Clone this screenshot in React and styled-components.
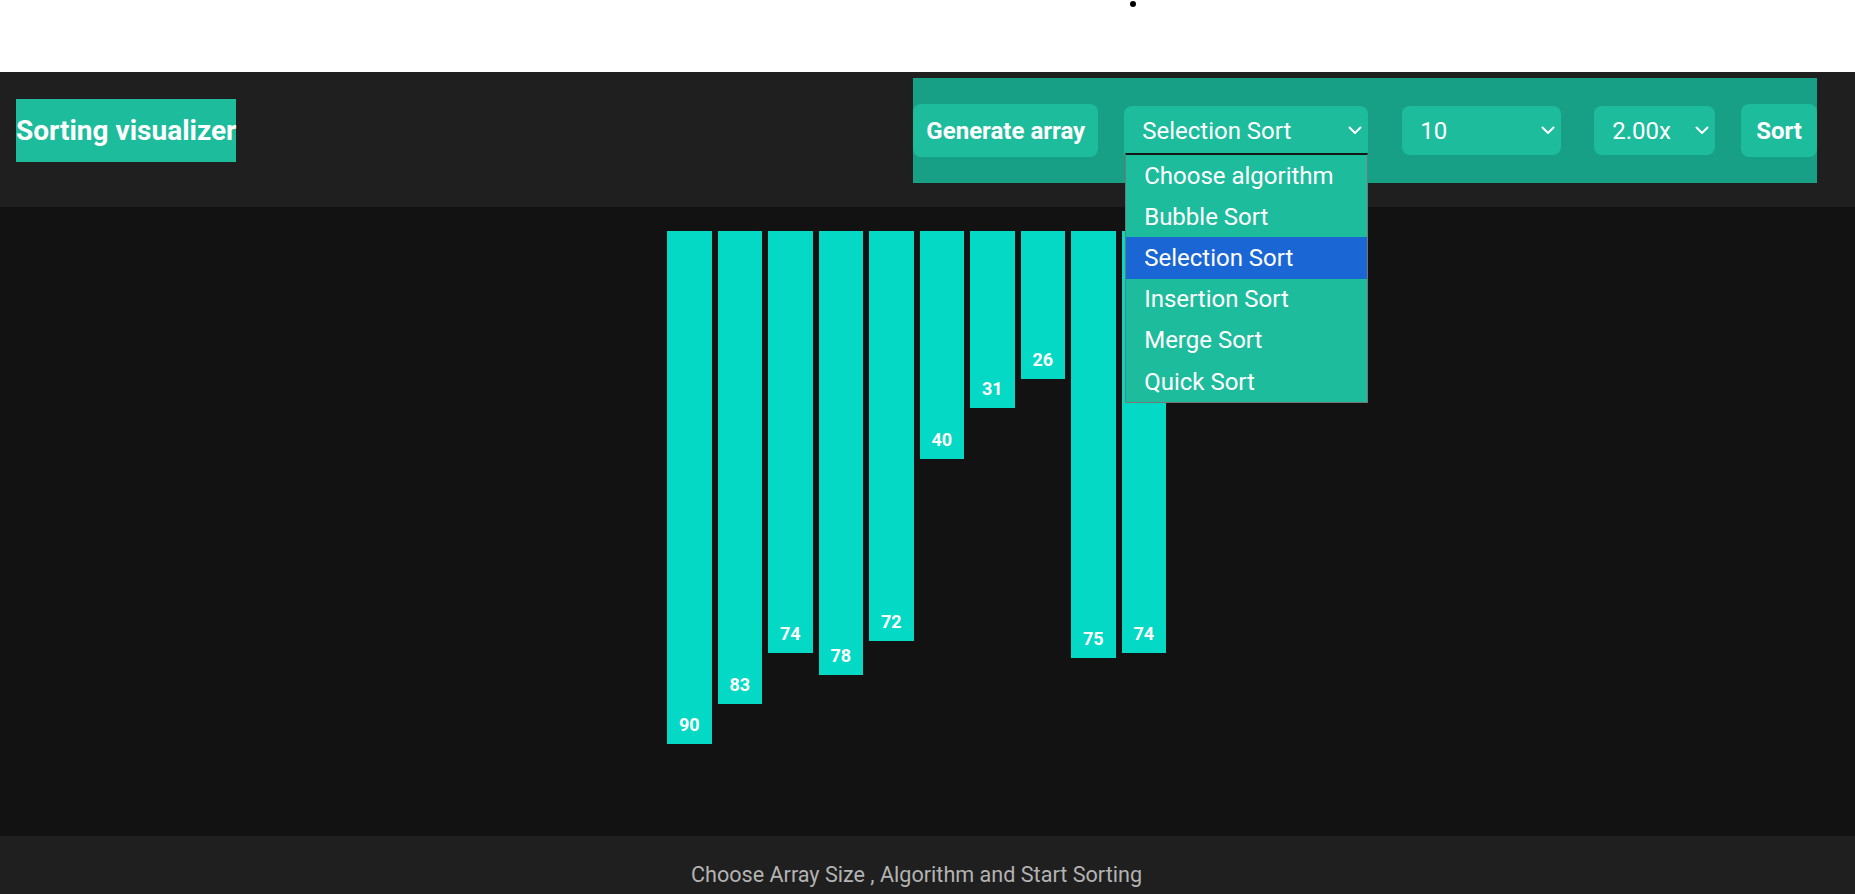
import { useState } from 'react';
import styled, { createGlobalStyle } from 'styled-components';

const GlobalStyle = createGlobalStyle`
  html, body {
    margin: 0;
    padding: 0;
    overflow: hidden;
    background: #ffffff;
    font-family: Roboto, "Noto Sans", Arial, sans-serif;
  }
  * {
    box-sizing: border-box;
  }
`;

const TopStrip = styled.div`
  height: 72px;
  background: #ffffff;
  padding-top: 1px;
`;

const Dot = styled.div`
  width: 6px;
  height: 6px;
  margin-left: 1130px;
  border-radius: 50%;
  background: #000;
`;

const Header = styled.header`
  display: flex;
  align-items: center;
  justify-content: space-between;
  height: 135px;
  padding: 6px 38px 24px 16px;
  background: #1f1f1f;
`;

const Title = styled.h1`
  display: flex;
  align-items: center;
  height: 63px;
  margin: 0;
  padding: 0;
  background: #1dbc9c;
  color: #ffffff;
  font-size: 28px;
  font-weight: 700;
  white-space: nowrap;
`;

const Panel = styled.div`
  display: flex;
  align-items: center;
  height: 105px;
  background: #17a086;
`;

const Button = styled.button`
  height: 53px;
  margin-left: ${({ $space }) => $space || 0}px;
  padding: 0 ${({ $pad }) => $pad || 15}px;
  border: none;
  border-radius: 8px;
  background: #1dbc9c;
  color: #ffffff;
  font-family: inherit;
  font-size: 24px;
  font-weight: 700;
  cursor: pointer;
`;

const SelectWrap = styled.div`
  position: relative;
  margin-left: ${({ $space }) => $space || 0}px;
`;

const SelectBox = styled.div`
  display: flex;
  align-items: center;
  justify-content: space-between;
  width: ${({ $width }) => $width}px;
  height: 49px;
  padding: 0 6px 0 18px;
  border-radius: ${({ $open }) => ($open ? '8px 8px 0 0' : '8px')};
  background: #1dbc9c;
  color: #ffffff;
  font-size: 24px;
  cursor: pointer;
`;

const Chevron = () => (
  <svg width="14" height="9" viewBox="0 0 14 9" fill="none">
    <polyline points="1.5,1.5 7,7 12.5,1.5" stroke="#ffffff" strokeWidth="2" strokeLinecap="round" strokeLinejoin="round" />
  </svg>
);

const Menu = styled.ul`
  position: absolute;
  top: calc(100% - 2px);
  left: 1px;
  right: 0;
  z-index: 10;
  margin: 0;
  padding: 0;
  list-style: none;
  background: #1dbc9c;
  border: 1px solid #767676;
  border-top: 2px solid #151515;
`;

const MenuItem = styled.li`
  display: flex;
  align-items: center;
  height: 41.2px;
  padding-left: 18px;
  background: ${({ $active }) => ($active ? '#1a66d4' : 'transparent')};
  color: #ffffff;
  font-size: 24px;
  white-space: nowrap;
`;

const Main = styled.main`
  display: flex;
  justify-content: center;
  align-items: flex-start;
  gap: 6px;
  height: 629px;
  padding: 24px 22px 0 0;
  background: #121212;
`;

const Bar = styled.div`
  display: flex;
  flex-direction: column;
  justify-content: flex-end;
  align-items: center;
  width: 44.5px;
  padding-bottom: 9px;
  background: #03d9c5;
  color: #ffffff;
  font-size: 18px;
  font-weight: 700;
`;

const Footer = styled.footer`
  height: 58px;
  padding: 26px 22px 0 0;
  background: #1f1f1f;
  color: #b3b3b3;
  font-size: 21.6px;
  text-align: center;
`;

const algorithms = [
  'Choose algorithm',
  'Bubble Sort',
  'Selection Sort',
  'Insertion Sort',
  'Merge Sort',
  'Quick Sort',
];

const values = [90, 83, 74, 78, 72, 40, 31, 26, 75, 74];

export default function App() {
  const [algorithm] = useState('Selection Sort');

  return (
    <>
      <GlobalStyle />
      <TopStrip>
        <Dot />
      </TopStrip>
      <Header>
        <Title>Sorting visualizer</Title>
        <Panel>
          <Button $pad={13}>Generate array</Button>
          <SelectWrap $space={26}>
            <SelectBox $width={244} $open>
              <span>{algorithm}</span>
              <Chevron />
            </SelectBox>
            <Menu>
              {algorithms.map((a) => (
                <MenuItem key={a} $active={a === algorithm}>
                  {a}
                </MenuItem>
              ))}
            </Menu>
          </SelectWrap>
          <SelectWrap $space={34}>
            <SelectBox $width={159}>
              <span>10</span>
              <Chevron />
            </SelectBox>
          </SelectWrap>
          <SelectWrap $space={33}>
            <SelectBox $width={121}>
              <span>2.00x</span>
              <Chevron />
            </SelectBox>
          </SelectWrap>
          <Button $space={26}>Sort</Button>
        </Panel>
      </Header>
      <Main>
        {values.map((v, i) => (
          <Bar key={i} style={{ height: `${v * 5.697}px` }}>
            {v}
          </Bar>
        ))}
      </Main>
      <Footer>Choose Array Size , Algorithm and Start Sorting</Footer>
    </>
  );
}
